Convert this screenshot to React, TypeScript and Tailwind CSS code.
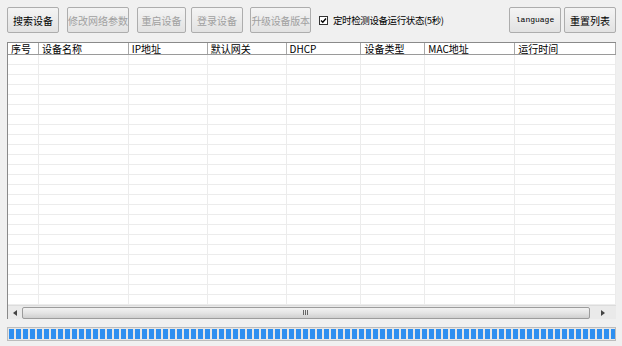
import React from "react";

const F = { fontFamily: '"Noto Sans CJK SC", "Liberation Sans", sans-serif' };

function Btn({ w, ml, children, disabled, mono }: { w: string; ml: string; children: React.ReactNode; disabled?: boolean; mono?: boolean }) {
  return (
    <div
      className={`${w} ${ml} h-[26px] shrink-0 whitespace-nowrap flex items-center justify-center border border-[#adadad] bg-gradient-to-b from-[#f4f4f4] to-[#e2e2e2] rounded-[2px] ${disabled ? "text-[#a0a0a0]" : "text-black"} ${mono ? "text-[8px]" : "text-[10px]"}`}
      style={mono ? { fontFamily: '"Liberation Mono", monospace' } : undefined}
    >
      {children}
    </div>
  );
}

const cols: { w: number; t: string }[] = [
  { w: 31, t: "序号" },
  { w: 90, t: "设备名称" },
  { w: 79, t: "IP地址" },
  { w: 79, t: "默认网关" },
  { w: 75, t: "DHCP" },
  { w: 64, t: "设备类型" },
  { w: 90, t: "MAC地址" },
  { w: 101, t: "运行时间" },
];

export default function App() {
  const rows = Array.from({ length: 25 });
  const blocks = Array.from({ length: 87 });
  return (
    <div className="w-[622px] h-[346px] bg-[#f0f0f0] overflow-hidden flex flex-col" style={F}>
      <div className="flex items-center pt-[7px] h-[33px]">
        <Btn w="w-[52px]" ml="ml-[7px]">搜索设备</Btn>
        <Btn w="w-[62px]" ml="ml-[8px]" disabled>修改网络参数</Btn>
        <Btn w="w-[49px]" ml="ml-[8px]" disabled>重启设备</Btn>
        <Btn w="w-[52px]" ml="ml-[5px]" disabled>登录设备</Btn>
        <Btn w="w-[61px]" ml="ml-[7px]" disabled><span className="tracking-[-0.3px]">升级设备版本</span></Btn>
        <div className="ml-[8px] flex items-center text-[9.5px] text-black whitespace-nowrap">
          <div className="w-[9px] h-[9px] border border-[#333] bg-white flex items-center justify-center">
            <svg width="7" height="7" viewBox="0 0 7 7">
              <path d="M1 3.5 L2.8 5.3 L6 1.5" stroke="#000" strokeWidth="1.4" fill="none" />
            </svg>
          </div>
          <span className="ml-[5px] tracking-[-0.4px]">定时检测设备运行状态(5秒)</span>
        </div>
        <div className="flex-1" />
        <Btn w="w-[52px]" ml="ml-0" mono>language</Btn>
        <Btn w="w-[52px]" ml="ml-[3px]">重置列表</Btn>
        <div className="w-[6px]" />
      </div>
      <div className="ml-[7px] mt-[9px] w-[609px] h-[277px] bg-white border-l border-t border-[#8a8a8a] flex flex-col">
        <div className="flex h-[12px] border-b border-[#9a9a9a] text-[10px] leading-[12px] text-black shrink-0">
          {cols.map((c, i) => (
            <div key={i} className="border-r border-[#a8a8a8] pl-[3px] whitespace-nowrap" style={{ width: c.w }}>
              {c.t}
            </div>
          ))}
        </div>
        <div className="flex-1 relative overflow-hidden">
          <div className="flex flex-col">
            {rows.map((_, i) => (
              <div key={i} className="h-[10px] border-b border-[#ececec] flex">
                {cols.map((c, j) => (
                  <div key={j} className="border-r border-[#ececec] h-full" style={{ width: c.w }} />
                ))}
              </div>
            ))}
          </div>
        </div>
        <div className="h-[14px] shrink-0 bg-[#eaeaea] flex items-center border-t border-[#dcdcdc]">
          <div className="w-[14px] flex items-center justify-center">
            <svg width="4" height="6" viewBox="0 0 4 6"><path d="M4 0 L0 3 L4 6 Z" fill="#444" /></svg>
          </div>
          <div className="w-[568px] h-[12px] rounded-[2px] border border-[#9c9c9c] bg-gradient-to-b from-[#f2f2f2] via-[#e4e4e4] to-[#cfcfcf] flex items-center justify-center">
            <svg width="6" height="5" viewBox="0 0 6 5"><path d="M0.5 0 V5 M2.5 0 V5 M4.5 0 V5" stroke="#666" strokeWidth="1" /></svg>
          </div>
          <div className="flex-1 flex items-center justify-center">
            <svg width="4" height="6" viewBox="0 0 4 6"><path d="M0 0 L4 3 L0 6 Z" fill="#444" /></svg>
          </div>
        </div>
      </div>
      <div className="ml-[7px] mt-[8px] w-[609px] h-[14px] shrink-0 border border-[#bcbcbc] bg-[#e6e6e6] flex items-center pl-[1px] gap-[2px] overflow-hidden">
        {blocks.map((_, i) => (
          <div key={i} className="w-[5px] h-[10px] bg-[#2d8ff0] shrink-0" />
        ))}
      </div>
    </div>
  );
}
